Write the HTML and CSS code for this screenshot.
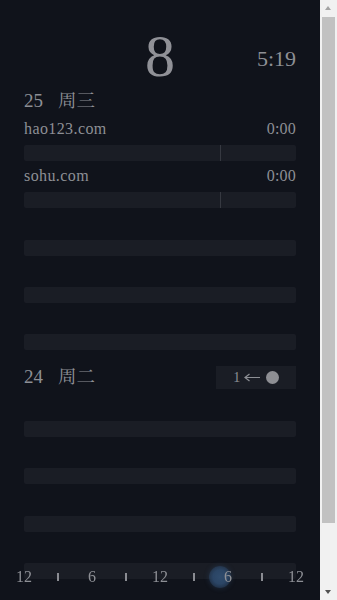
FILE: index.html
```
<!DOCTYPE html>
<html lang="zh">
<head>
<meta charset="utf-8">
<title>Time</title>
<link rel="stylesheet" href="styles.css">
</head>
<body>
<div class="app">
  <header class="top">
    <div class="big">8</div>
    <div class="clock">5:19</div>
  </header>

  <section class="day">
    <div class="day-head">
      <div class="date"><span class="num">25</span><span class="wk">周三</span></div>
    </div>
    <div class="row">
      <div class="label"><span class="site">hao123.com</span><span class="dur">0:00</span></div>
      <div class="bar"><span class="mark" style="left:72.15%"></span></div>
    </div>
    <div class="row">
      <div class="label"><span class="site">sohu.com</span><span class="dur">0:00</span></div>
      <div class="bar"><span class="mark" style="left:72.15%"></span></div>
    </div>
    <div class="row"><div class="label"></div><div class="bar"></div></div>
    <div class="row"><div class="label"></div><div class="bar"></div></div>
    <div class="row"><div class="label"></div><div class="bar"></div></div>
  </section>

  <section class="day day-next">
    <div class="day-head">
      <div class="date"><span class="num">24</span><span class="wk">周二</span></div>
      <div class="badge">
        <span class="badge-num">1</span>
        <svg class="arrow" width="16" height="9" viewBox="0 0 16 9"><path d="M1 4.5H16M5.5 1L1 4.5L5.5 8" fill="none" stroke="#8d8f95" stroke-width="1.2"/></svg>
        <span class="dot"></span>
      </div>
    </div>
    <div class="row"><div class="label"></div><div class="bar"></div></div>
    <div class="row"><div class="label"></div><div class="bar"></div></div>
    <div class="row"><div class="label"></div><div class="bar"></div></div>
    <div class="row"><div class="label"></div><div class="bar"></div></div>
    <div class="row"><div class="label"></div><div class="bar"></div></div>
  </section>
</div>

<nav class="timeline">
  <span class="now" style="left:calc(10px + 72.15% * 272 / 292)"></span>
  <span class="tl-item">12</span>
  <span class="tl-item"><i class="tick"></i></span>
  <span class="tl-item">6</span>
  <span class="tl-item"><i class="tick"></i></span>
  <span class="tl-item">12</span>
  <span class="tl-item"><i class="tick"></i></span>
  <span class="tl-item">6</span>
  <span class="tl-item"><i class="tick"></i></span>
  <span class="tl-item">12</span>
</nav>

<div class="scrollbar" aria-hidden="true">
  <span class="sb-up"></span>
  <span class="sb-thumb"></span>
  <span class="sb-down"></span>
</div>
</body>
</html>
```
FILE: styles.css
```
html, body {
  margin: 0;
  padding: 0;
  background: #10131b;
}
body {
  font-family: "Liberation Serif", "Noto Serif CJK SC", "Noto Sans CJK SC", serif;
  color: #8d8f95;
}
.app {
  margin-right: 17px;
  padding: 0 24px 45px;
}
.top {
  display: grid;
  grid-template-columns: 1fr auto 1fr;
  align-items: start;
  padding-top: 25.75px;
}
.big {
  grid-column: 2;
  font-size: 60px;
  line-height: 60px;
  color: #909197;
}
.clock {
  grid-column: 3;
  justify-self: end;
  font-size: 22px;
  line-height: 22px;
  margin-top: 22px;
}
.day-next {
  margin-top: 11.75px;
}
.day-head {
  display: flex;
  justify-content: space-between;
  align-items: flex-start;
  height: 28px;
}
.date {
  font-size: 19px;
  line-height: 28px;
  padding-top: 1.6px;
  white-space: nowrap;
}
.wk {
  margin-left: 15px;
  font-size: 18.5px;
}
.badge {
  margin-top: 4.4px;
  width: 80px;
  height: 23px;
  background: #1a1d25;
  display: flex;
  align-items: center;
  justify-content: center;
  gap: 4px;
}
.badge-num {
  font-size: 14px;
  line-height: 14px;
  margin-top: 1px;
}
.arrow {
  display: block;
}
.dot {
  width: 13px;
  height: 13px;
  border-radius: 50%;
  background: #8e8f94;
  margin-left: 1.7px;
}
.row {
  display: flex;
  flex-direction: column;
}
.label {
  height: 31.25px;
  display: flex;
  justify-content: space-between;
  font-size: 16px;
  line-height: 29px;
  letter-spacing: 0.4px;
}
.dur {
  letter-spacing: 0.2px;
}
.bar {
  position: relative;
  height: 16px;
  background: #1a1d25;
  border-radius: 2px;
}
.mark {
  position: absolute;
  top: 0;
  bottom: 0;
  width: 1px;
  background: #363941;
}
.timeline {
  position: fixed;
  left: 14px;
  right: 31px;
  bottom: 13px;
  height: 20px;
  display: flex;
  justify-content: space-between;
  font-family: "Liberation Serif", serif;
  font-size: 16px;
  line-height: 20px;
  color: #8d8f95;
}
.tl-item {
  position: relative;
  width: 20px;
  display: flex;
  justify-content: center;
  align-items: center;
  z-index: 1;
}
.tick {
  display: block;
  width: 2px;
  height: 8px;
  background: #8a8c92;
}
.now {
  position: absolute;
  top: -1px;
  width: 22px;
  height: 22px;
  margin-left: -11px;
  border-radius: 50%;
  background: radial-gradient(circle, #304c6d 0%, #2b4565 45%, rgba(43, 69, 101, 0.6) 72%, rgba(43, 69, 101, 0) 100%);
  box-shadow: 0 0 4px 1px rgba(43, 69, 101, 0.35);
}
.scrollbar {
  position: fixed;
  top: 0;
  right: 0;
  bottom: 0;
  width: 17px;
  background: #f1f1f1;
}
.sb-thumb {
  position: absolute;
  top: 17px;
  left: 2px;
  right: 2px;
  height: 506px;
  background: #c1c1c1;
}
.sb-up,
.sb-down {
  position: absolute;
  left: 5px;
  width: 0;
  height: 0;
  border-left: 3.5px solid transparent;
  border-right: 3.5px solid transparent;
}
.sb-up {
  top: 6px;
  border-bottom: 4px solid #a3a3a3;
}
.sb-down {
  bottom: 6px;
  border-top: 4px solid #505050;
}
```
